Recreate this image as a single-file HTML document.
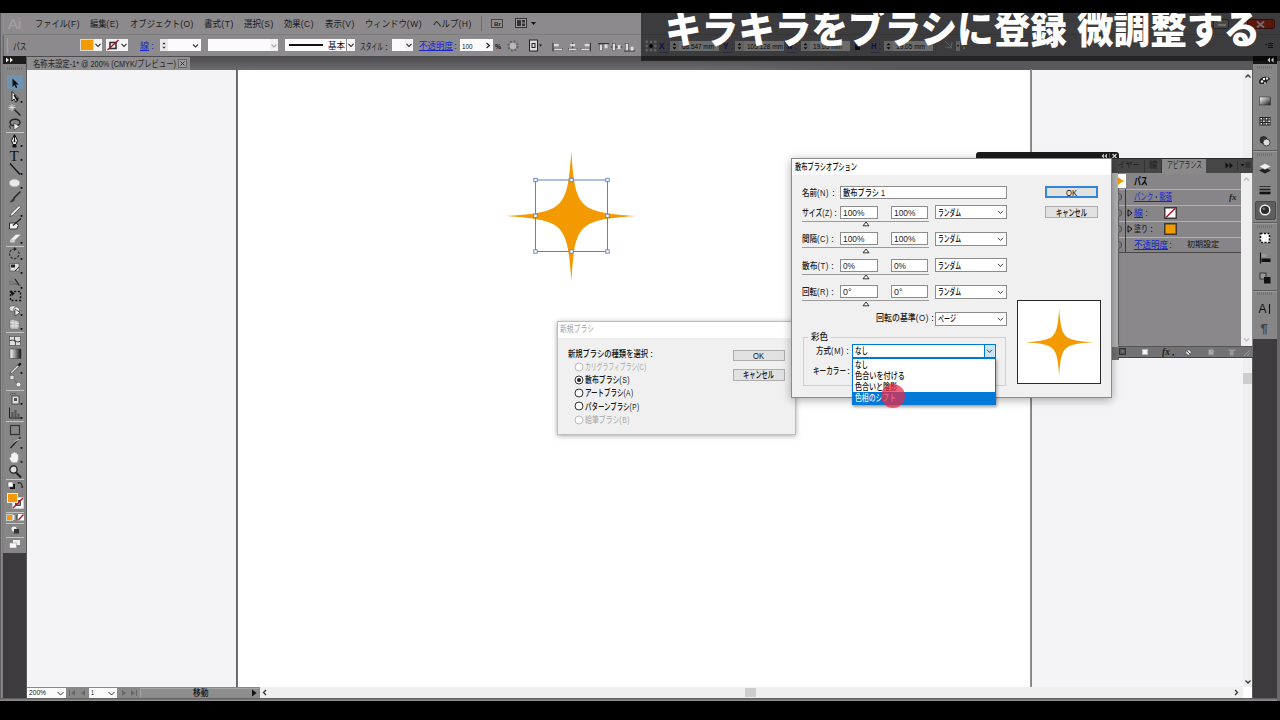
<!DOCTYPE html>
<html lang="ja">
<head>
<meta charset="utf-8">
<title>Illustrator</title>
<style>
html,body{margin:0;padding:0;}
body{width:1280px;height:720px;overflow:hidden;background:#000;position:relative;
 font-family:"Liberation Sans","Noto Sans CJK JP",sans-serif;font-size:10px;color:#111;}
.a{position:absolute;}
.t{position:absolute;white-space:nowrap;line-height:1;transform-origin:0 50%;}
</style>
</head>
<body>
<div class="a" style="left:0px;top:13px;width:1280px;height:688px;background:#777;"></div>
<div class="a" style="left:0px;top:13px;width:1280px;height:21px;background:#8c8a8d;"></div>
<div class="a" style="left:0px;top:34px;width:1280px;height:1px;background:#7d7c7d;"></div>
<div class="a" style="left:3px;top:35px;width:1277px;height:21px;background:#8c8a8d;"></div>
<svg class="a" style="left:0px;top:13px;" width="4" height="688" viewBox="0 0 4 688"><rect x="0" y="0" width="0.9" height="688" fill="#5b5a5c"/><rect x="0.9" y="0" width="1.9" height="688" fill="#8c8a8d"/><rect x="2.8" y="22" width="0.8" height="666" fill="#545355"/></svg>
<div class="a" style="left:27px;top:56px;width:1226px;height:13.5px;background:linear-gradient(#4b4a4c,#6d6b6e);"></div>
<div class="a" style="left:700px;top:56px;width:553px;height:13.5px;background:linear-gradient(90deg,rgba(88,87,89,0),rgba(88,87,89,1) 200px);"></div>
<div class="a" style="left:27px;top:57px;width:163px;height:12.5px;background:#908e91;"></div>
<div class="a" style="left:27px;top:69.5px;width:1216px;height:617.5px;background:#f4f3f5;"></div>
<div class="a" style="left:237px;top:69.5px;width:794px;height:617.5px;background:#fff;"></div>
<svg class="a" style="left:235px;top:69px;" width="4" height="619" viewBox="0 0 4 619"><rect x="1.1" y="0" width="1.7" height="619" fill="#555457"/></svg>
<svg class="a" style="left:1029px;top:69px;" width="4" height="619" viewBox="0 0 4 619"><rect x="1.1" y="0" width="1.9" height="619" fill="#858486"/></svg>
<div class="a" style="left:1243px;top:69.5px;width:10px;height:617.5px;background:#f0eff0;"></div>
<div class="a" style="left:260px;top:687px;width:983px;height:11px;background:#f0eff0;"></div>
<div class="a" style="left:1243px;top:687px;width:10px;height:11px;background:#fff;"></div>
<div class="a" style="left:0px;top:698px;width:1280px;height:3px;background:linear-gradient(#5a595a,#9a999a);"></div>
<div class="a" style="left:3px;top:56px;width:23px;height:8px;background:#1c1c1c;"></div>
<div class="a" style="left:3px;top:64px;width:23px;height:489px;background:#878687;"></div>
<div class="a" style="left:3px;top:553px;width:23px;height:145px;background:#3d3b3d;"></div>
<div class="a" style="left:26px;top:56px;width:1px;height:642px;background:#5a595a;"></div>
<div class="a" style="left:1253px;top:56px;width:24px;height:8px;background:#151515;"></div>
<div class="a" style="left:1253px;top:64px;width:24px;height:275px;background:#878687;"></div>
<div class="a" style="left:1253px;top:339px;width:24px;height:359px;background:#3d3b3d;"></div>
<div class="a" style="left:1277px;top:56px;width:3px;height:645px;background:#6a696a;"></div>
<div class="a" style="left:1252px;top:64px;width:1px;height:634px;background:#5a595a;"></div>
<span class="t" style="left:8px;top:16.00px;font-size:15px;color:#a3a2a3;transform:scaleX(1.0117);">Ai</span>
<span class="t" style="left:35px;top:19.05px;font-size:9.5px;color:#1b1b1b;transform:scaleX(0.8628);">ファイル<span style="letter-spacing:.07em">(F)</span></span>
<span class="t" style="left:90px;top:19.05px;font-size:9.5px;color:#1b1b1b;transform:scaleX(0.8609);">編集<span style="letter-spacing:.07em">(E)</span></span>
<span class="t" style="left:130px;top:19.05px;font-size:9.5px;color:#1b1b1b;transform:scaleX(0.8799);">オブジェクト<span style="letter-spacing:.07em">(O)</span></span>
<span class="t" style="left:204px;top:19.05px;font-size:9.5px;color:#1b1b1b;transform:scaleX(0.9048);">書式<span style="letter-spacing:.07em">(T)</span></span>
<span class="t" style="left:244px;top:19.05px;font-size:9.5px;color:#1b1b1b;transform:scaleX(0.8905);">選択<span style="letter-spacing:.07em">(S)</span></span>
<span class="t" style="left:284px;top:19.05px;font-size:9.5px;color:#1b1b1b;transform:scaleX(0.8771);">効果<span style="letter-spacing:.07em">(C)</span></span>
<span class="t" style="left:324.5px;top:19.05px;font-size:9.5px;color:#1b1b1b;transform:scaleX(0.8905);">表示<span style="letter-spacing:.07em">(V)</span></span>
<span class="t" style="left:365px;top:19.05px;font-size:9.5px;color:#1b1b1b;transform:scaleX(0.8795);">ウィンドウ<span style="letter-spacing:.07em">(W)</span></span>
<span class="t" style="left:433px;top:19.05px;font-size:9.5px;color:#1b1b1b;transform:scaleX(0.8924);">ヘルプ<span style="letter-spacing:.07em">(H)</span></span>
<div class="a" style="left:481px;top:16px;width:1px;height:15px;background:#6d6c6d;"></div>
<div class="a" style="left:491px;top:19px;width:12px;height:9px;background:#8f8f8f;border:1px solid #444;box-sizing:border-box;"></div>
<span class="t" style="left:493.5px;top:20.80px;font-size:6px;color:#222;font-weight:700;transform:scaleX(1.0492);">Br</span>
<svg class="a" style="left:515px;top:18px;" width="22" height="11" viewBox="0 0 22 11"><rect x="0.5" y="0.5" width="11" height="9" fill="#999" stroke="#333"/><rect x="2" y="2" width="4" height="6" fill="#333"/><rect x="7" y="2" width="3" height="2.5" fill="#333"/><rect x="7" y="5.5" width="3" height="2.5" fill="#333"/><path d="M16 4h5l-2.5 3z" fill="#111"/></svg>
<div class="a" style="left:7px;top:38px;width:1px;height:15px;background:#a2a1a2;"></div>
<span class="t" style="left:13px;top:41.65px;font-size:9.5px;color:#1b1b1b;transform:scaleX(0.7099);">パス</span>
<div class="a" style="left:80px;top:39px;width:14px;height:12px;background:#f39a00;border:1px solid #d9d9d9;box-sizing:border-box;"></div>
<svg class="a" style="left:94px;top:39px;" width="8" height="12" viewBox="0 0 8 12"><rect width="8" height="12" fill="#f4f4f4"/><path d="M1.5 4.8L4.0 7.5L6.5 4.8" fill="none" stroke="#222" stroke-width="1.1"/></svg>
<svg class="a" style="left:106px;top:39px;" width="14" height="12" viewBox="0 0 14 12"><rect width="14" height="12" fill="#f4f4f4"/><rect x="4" y="3.5" width="6" height="6" fill="none" stroke="#333" stroke-width="1.6"/><path d="M1.5 11L12.5 1" stroke="#b0121b" stroke-width="1.4"/></svg>
<svg class="a" style="left:120px;top:39px;" width="8" height="12" viewBox="0 0 8 12"><rect width="8" height="12" fill="#f4f4f4"/><path d="M1.5 4.8L4.0 7.5L6.5 4.8" fill="none" stroke="#222" stroke-width="1.1"/></svg>
<span class="t" style="left:140px;top:41.70px;font-size:9px;color:#1626cc;text-decoration:underline;transform:scaleX(0.9983);">線</span>
<span class="t" style="left:151px;top:41.70px;font-size:9px;color:#1626cc;transform:scaleX(1.1925);">:</span>
<svg class="a" style="left:160px;top:39px;" width="8" height="12" viewBox="0 0 8 12"><rect width="8" height="12" fill="#e9e9e9"/><path d="M2.3 5.3L4 3.3L5.7 5.3zM2.3 7.7L4 9.7L5.7 7.7z" fill="#333"/></svg>
<div class="a" style="left:168px;top:39px;width:33px;height:12px;background:#fbfbfb;"></div>
<svg class="a" style="left:190px;top:39px;" width="11" height="13" viewBox="0 0 11 13"><path d="M3 5.5L5.5 8L8 5.5" fill="none" stroke="#333" stroke-width="1.1"/></svg>
<div class="a" style="left:208px;top:39px;width:62px;height:12px;background:#fbfbfb;"></div>
<svg class="a" style="left:270px;top:39px;" width="8" height="12" viewBox="0 0 8 12"><rect width="8" height="12" fill="#f1f1f1"/><path d="M1.5 5.5L4 8L6.5 5.5" fill="none" stroke="#aaa" stroke-width="1.1"/></svg>
<div class="a" style="left:285px;top:39px;width:61px;height:12px;background:#fbfbfb;"></div>
<div class="a" style="left:289px;top:44.3px;width:34px;height:2px;background:#111;"></div>
<span class="t" style="left:328px;top:41.70px;font-size:9px;color:#111;transform:scaleX(0.9436);">基本</span>
<svg class="a" style="left:347px;top:39px;" width="8" height="12" viewBox="0 0 8 12"><rect width="8" height="12" fill="#f4f4f4"/><path d="M1.5 4.8L4.0 7.5L6.5 4.8" fill="none" stroke="#222" stroke-width="1.1"/></svg>
<span class="t" style="left:360px;top:41.65px;font-size:9.5px;color:#1b1b1b;transform:scaleX(0.6050);">スタイル</span>
<span class="t" style="left:385px;top:41.65px;font-size:9.5px;color:#1b1b1b;transform:scaleX(1.1361);">:</span>
<div class="a" style="left:392px;top:39px;width:13px;height:12px;background:#fbfbfb;"></div>
<svg class="a" style="left:405px;top:39px;" width="8" height="12" viewBox="0 0 8 12"><rect width="8" height="12" fill="#f4f4f4"/><path d="M1.5 4.8L4.0 7.5L6.5 4.8" fill="none" stroke="#222" stroke-width="1.1"/></svg>
<span class="t" style="left:419px;top:41.90px;font-size:9px;color:#1626cc;text-decoration:underline;transform:scaleX(0.9440);">不透明度</span>
<span class="t" style="left:454px;top:41.90px;font-size:9px;color:#1626cc;transform:scaleX(1.1925);">:</span>
<div class="a" style="left:460px;top:39px;width:33px;height:12px;background:#fbfbfb;"></div>
<span class="t" style="left:462px;top:42.70px;font-size:7px;color:#111;transform:scaleX(0.8984);">100</span>
<svg class="a" style="left:483px;top:39px;" width="10" height="13" viewBox="0 0 10 13"><path d="M3.5 4L6.5 6.5L3.5 9" fill="none" stroke="#222" stroke-width="1.2"/></svg>
<span class="t" style="left:495px;top:42.70px;font-size:7px;color:#111;font-weight:700;transform:scaleX(0.9624);">%</span>
<svg class="a" style="left:506px;top:39px;" width="14" height="14" viewBox="0 0 14 14"><circle cx="7" cy="7" r="4.6" fill="none" stroke="#666" stroke-width="2.2" stroke-dasharray="2 1.6"/><circle cx="7" cy="7" r="3.2" fill="#b8b8b8"/></svg>
<svg class="a" style="left:528px;top:39px;" width="14" height="14" viewBox="0 0 14 14"><rect x="1.5" y="1" width="8" height="11" fill="#ddd" stroke="#222"/><rect x="4" y="4.5" width="3" height="4" fill="none" stroke="#222"/><path d="M11 5.5h3l-1.5 2z" fill="#111"/></svg>
<svg class="a" style="left:552px;top:41.5px;transform:scale(.95,.78);transform-origin:0 0;" width="12" height="13" viewBox="0 0 12 13"><path d="M1 1v11" stroke="#222"/><rect x="2" y="2.5" width="5" height="3" fill="#ddd"/><rect x="2" y="8" width="9" height="3" fill="#ddd" stroke="#333" stroke-width=".5"/></svg>
<svg class="a" style="left:567px;top:41.5px;transform:scale(.95,.78);transform-origin:0 0;" width="12" height="13" viewBox="0 0 12 13"><path d="M6 1v11" stroke="#222"/><rect x="3.5" y="2.5" width="5" height="3" fill="#ddd"/><rect x="1.5" y="8" width="9" height="3" fill="#ddd" stroke="#333" stroke-width=".5"/></svg>
<svg class="a" style="left:580px;top:41.5px;transform:scale(.95,.78);transform-origin:0 0;" width="12" height="13" viewBox="0 0 12 13"><path d="M11 1v11" stroke="#222"/><rect x="5" y="2.5" width="5" height="3" fill="#ddd"/><rect x="1" y="8" width="9" height="3" fill="#ddd" stroke="#333" stroke-width=".5"/></svg>
<svg class="a" style="left:598px;top:41.5px;transform:scale(.95,.78);transform-origin:0 0;" width="12" height="13" viewBox="0 0 12 13"><path d="M0 2h12" stroke="#222"/><rect x="1.5" y="3" width="3" height="8" fill="#ddd" stroke="#333" stroke-width=".5"/><rect x="7" y="3" width="3" height="5" fill="#ddd"/></svg>
<svg class="a" style="left:611px;top:41.5px;transform:scale(.95,.78);transform-origin:0 0;" width="12" height="13" viewBox="0 0 12 13"><path d="M0 6.5h12" stroke="#222"/><rect x="1.5" y="2" width="3" height="9" fill="#ddd" stroke="#333" stroke-width=".5"/><rect x="7" y="4" width="3" height="5" fill="#ddd"/></svg>
<svg class="a" style="left:624px;top:41.5px;transform:scale(.95,.78);transform-origin:0 0;" width="12" height="13" viewBox="0 0 12 13"><path d="M0 11.5h12" stroke="#222"/><rect x="1.5" y="2" width="3" height="9" fill="#ddd" stroke="#333" stroke-width=".5"/><rect x="7" y="6" width="3" height="5" fill="#ddd"/></svg>
<span class="t" style="left:33px;top:58.55px;font-size:9.5px;color:#262626;transform:scaleX(0.7712);">名称未設定-1* @ 200% (CMYK/プレビュー)</span>
<svg class="a" style="left:178px;top:59px;" width="9" height="9" viewBox="0 0 9 9"><rect x=".5" y=".5" width="8" height="8" fill="#9b9b9b" stroke="#666"/><path d="M2.5 2.5l4 4M6.5 2.5l-4 4" stroke="#333" stroke-width="1"/></svg>
<svg class="a" style="left:500px;top:150px;" width="142" height="132" viewBox="0 0 142 132"><path d="M71.3 1.3C75.28 58.9 78.5 62.12 136.1 66.1C78.5 70.08 75.28 73.3 71.3 130.9C67.32 73.3 64.1 70.08 6.5 66.1C64.1 62.12 67.32 58.9 71.3 1.3Z" fill="#f39a00"/><rect x="35.5" y="30" width="72" height="71.5" fill="none" stroke="#5d80c8" stroke-width="1"/><rect x="33.8" y="28.3" width="3.4" height="3.4" fill="#fff" stroke="#5d80c8" stroke-width=".9"/><rect x="69.8" y="28.3" width="3.4" height="3.4" fill="#fff" stroke="#5d80c8" stroke-width=".9"/><rect x="105.8" y="28.3" width="3.4" height="3.4" fill="#fff" stroke="#5d80c8" stroke-width=".9"/><rect x="33.8" y="64.1" width="3.4" height="3.4" fill="#fff" stroke="#5d80c8" stroke-width=".9"/><rect x="105.8" y="64.1" width="3.4" height="3.4" fill="#fff" stroke="#5d80c8" stroke-width=".9"/><rect x="33.8" y="99.8" width="3.4" height="3.4" fill="#fff" stroke="#5d80c8" stroke-width=".9"/><rect x="69.8" y="99.8" width="3.4" height="3.4" fill="#fff" stroke="#5d80c8" stroke-width=".9"/><rect x="105.8" y="99.8" width="3.4" height="3.4" fill="#fff" stroke="#5d80c8" stroke-width=".9"/></svg>
<svg class="a" style="left:1243px;top:70px;" width="10" height="12" viewBox="0 0 10 12"><path d="M2.5 7.5L5 5L7.5 7.5" fill="none" stroke="#333" stroke-width="1.3"/></svg>
<svg class="a" style="left:1243px;top:676px;" width="10" height="12" viewBox="0 0 10 12"><path d="M2.5 4.5L5 7L7.5 4.5" fill="none" stroke="#333" stroke-width="1.3"/></svg>
<svg class="a" style="left:1231px;top:687px;" width="10" height="11" viewBox="0 0 10 11"><path d="M4 3L6.5 5.5L4 8" fill="none" stroke="#333" stroke-width="1.3"/></svg>
<svg class="a" style="left:260px;top:687px;" width="10" height="11" viewBox="0 0 10 11"><path d="M6 3L3.5 5.5L6 8" fill="none" stroke="#333" stroke-width="1.3"/></svg>
<div class="a" style="left:745px;top:688px;width:11px;height:9px;background:#cdcdcd;"></div>
<div class="a" style="left:1243px;top:373px;width:8.5px;height:11px;background:#cdcdcd;"></div>
<div class="a" style="left:27px;top:687px;width:233px;height:11px;background:#8a898a;"></div>
<div class="a" style="left:27px;top:688px;width:39px;height:10px;background:#fbfbfb;"></div>
<span class="t" style="left:29px;top:689.00px;font-size:8px;color:#111;transform:scaleX(0.8305);">200%</span>
<svg class="a" style="left:55px;top:688px;" width="11" height="10" viewBox="0 0 11 10"><path d="M2.5 4L5.5 7L8.5 4" fill="none" stroke="#333" stroke-width="1"/></svg>
<svg class="a" style="left:68px;top:689px;" width="8" height="8" viewBox="0 0 8 8"><path d="M1.5 1v6" stroke="#666"/><path d="M7 1L3 4L7 7z" fill="#666"/></svg>
<svg class="a" style="left:79px;top:689px;" width="8" height="8" viewBox="0 0 8 8"><path d="M6 1L2 4L6 7z" fill="#666"/></svg>
<div class="a" style="left:89px;top:688px;width:28px;height:10px;background:#fbfbfb;"></div>
<span class="t" style="left:91px;top:689.00px;font-size:8px;color:#111;transform:scaleX(0.6737);">1</span>
<svg class="a" style="left:106px;top:688px;" width="11" height="10" viewBox="0 0 11 10"><path d="M2.5 4L5.5 7L8.5 4" fill="none" stroke="#333" stroke-width="1"/></svg>
<svg class="a" style="left:120px;top:689px;" width="8" height="8" viewBox="0 0 8 8"><path d="M2 1L6 4L2 7z" fill="#666"/></svg>
<svg class="a" style="left:130px;top:689px;" width="8" height="8" viewBox="0 0 8 8"><path d="M6.5 1v6" stroke="#666"/><path d="M1 1L5 4L1 7z" fill="#666"/></svg>
<div class="a" style="left:140px;top:688px;width:119px;height:10px;background:#8e8d8e;border:none;box-sizing:border-box;border-top:1px solid #a5a5a5;border-left:1px solid #a5a5a5;box-sizing:border-box;"></div>
<span class="t" style="left:192.5px;top:688.50px;font-size:9px;color:#111;font-weight:500;transform:scaleX(0.8604);">移動</span>
<svg class="a" style="left:250px;top:689px;" width="8" height="8" viewBox="0 0 8 8"><path d="M2 .5L6.5 4L2 7.5z" fill="#111"/></svg>
<div class="a" style="left:557px;top:321px;width:239px;height:114px;background:#f0f0f0;border:1px solid #bdbdbd;box-sizing:border-box;box-shadow:0 1px 5px rgba(0,0,0,.35);"></div>
<div class="a" style="left:558px;top:322px;width:237px;height:16px;background:#fff;"></div>
<span class="t" style="left:560px;top:325.20px;font-size:9px;color:#a0a0a0;transform:scaleX(0.7585);">新規ブラシ</span>
<span class="t" style="left:568px;top:348.95px;font-size:9.5px;color:#111;font-weight:500;transform:scaleX(0.7669);">新規ブラシの種類を選択</span>
<span class="t" style="left:650px;top:348.95px;font-size:9.5px;color:#111;font-weight:500;transform:scaleX(1.1361);">:</span>
<svg class="a" style="left:573.7px;top:361.9px;" width="10" height="10" viewBox="0 0 10 10"><circle cx="5" cy="5" r="4" fill="#fff" stroke="#bbb" stroke-width="1"/></svg>
<span class="t" style="left:585px;top:362.15px;font-size:9.5px;color:#a8a8a8;transform:scaleX(0.6131);">カリグラフィブラシ<span style="letter-spacing:.07em">(C)</span></span>
<svg class="a" style="left:573.7px;top:375.04999999999995px;" width="10" height="10" viewBox="0 0 10 10"><circle cx="5" cy="5" r="4" fill="#fff" stroke="#333" stroke-width="1"/><circle cx="5" cy="5" r="2" fill="#222"/></svg>
<span class="t" style="left:585px;top:375.30px;font-size:9.5px;color:#111;font-weight:500;transform:scaleX(0.7260);">散布ブラシ<span style="letter-spacing:.07em">(S)</span></span>
<svg class="a" style="left:573.7px;top:388.2px;" width="10" height="10" viewBox="0 0 10 10"><circle cx="5" cy="5" r="4" fill="#fff" stroke="#333" stroke-width="1"/></svg>
<span class="t" style="left:585px;top:388.45px;font-size:9.5px;color:#111;font-weight:500;transform:scaleX(0.6839);">アートブラシ<span style="letter-spacing:.07em">(A)</span></span>
<svg class="a" style="left:573.7px;top:401.34999999999997px;" width="10" height="10" viewBox="0 0 10 10"><circle cx="5" cy="5" r="4" fill="#fff" stroke="#333" stroke-width="1"/></svg>
<span class="t" style="left:585px;top:401.60px;font-size:9.5px;color:#111;font-weight:500;transform:scaleX(0.6793);">パターンブラシ<span style="letter-spacing:.07em">(P)</span></span>
<svg class="a" style="left:573.7px;top:414.5px;" width="10" height="10" viewBox="0 0 10 10"><circle cx="5" cy="5" r="4" fill="#fff" stroke="#bbb" stroke-width="1"/></svg>
<span class="t" style="left:585px;top:414.75px;font-size:9.5px;color:#a8a8a8;transform:scaleX(0.7260);">絵筆ブラシ<span style="letter-spacing:.07em">(B)</span></span>
<div class="a" style="left:732.5px;top:349.5px;width:52px;height:11.5px;background:#e1e1e1;border:1px solid #adadad;box-sizing:border-box;"></div>
<span class="t" style="left:753.0px;top:350.80px;font-size:9.5px;color:#111;font-weight:500;transform:scaleX(0.8009);">OK</span>
<div class="a" style="left:732.5px;top:369px;width:52px;height:11.5px;background:#e1e1e1;border:1px solid #adadad;box-sizing:border-box;"></div>
<span class="t" style="left:743.0px;top:370.30px;font-size:9.5px;color:#111;font-weight:500;transform:scaleX(0.6524);">キャンセル</span>
<div class="a" style="left:975.5px;top:152px;width:143px;height:8px;background:#1b1b1b;border:none;box-sizing:border-box;border-radius:3px 3px 0 0;"></div>
<svg class="a" style="left:1100px;top:153px;" width="18" height="6" viewBox="0 0 18 6"><path d="M4 .5L1.5 3L4 5.5zM7 .5L4.5 3L7 5.5z" fill="#ccc"/><path d="M9.5 0v6" stroke="#555"/><path d="M12.5 1l4 4M16.5 1l-4 4" stroke="#ddd" stroke-width="1.1"/></svg>
<div class="a" style="left:1112px;top:158px;width:141px;height:200px;background:#8a888b;"></div>
<div class="a" style="left:1112px;top:158px;width:141px;height:15px;background:#474647;"></div>
<div class="a" style="left:1112px;top:157.5px;width:141px;height:1px;background:#2c2c2c;"></div>
<div class="a" style="left:1162px;top:159px;width:44px;height:14px;background:#8b8a8b;"></div>
<div class="a" style="left:1144px;top:160px;width:1px;height:13px;background:#333;"></div>
<div class="a" style="left:1161px;top:160px;width:1px;height:13px;background:#333;"></div>
<span class="t" style="left:1118px;top:161.30px;font-size:9px;color:#1d1d1d;transform:scaleX(0.8229);">イヤー</span>
<span class="t" style="left:1149px;top:161.30px;font-size:9px;color:#1d1d1d;transform:scaleX(0.9428);">線</span>
<span class="t" style="left:1167px;top:161.30px;font-size:9px;color:#222;transform:scaleX(0.6502);">アピアランス</span>
<svg class="a" style="left:1225px;top:162px;" width="9" height="7" viewBox="0 0 9 7"><path d="M.5 .5L4 3.5L.5 6.5zM4.5 .5L8 3.5L4.5 6.5z" fill="#111"/></svg>
<div class="a" style="left:1237px;top:161px;width:1px;height:9px;background:#333;"></div>
<svg class="a" style="left:1240px;top:162px;" width="11" height="7" viewBox="0 0 11 7"><path d="M.5 2h4l-2 2.5z" fill="#111"/><path d="M5.5 1h5M5.5 3h5M5.5 5h5" stroke="#222" stroke-width="1"/></svg>
<div class="a" style="left:1112px;top:173px;width:6px;height:173.5px;background:#b4b3b5;"></div>
<div class="a" style="left:1112px;top:347px;width:6.5px;height:12.5px;background:#737273;"></div>
<div class="a" style="left:1118px;top:173.5px;width:123px;height:15.5px;background:#878588;"></div>
<div class="a" style="left:1118px;top:189px;width:123px;height:15.5px;background:#878588;"></div>
<div class="a" style="left:1118px;top:205px;width:123px;height:15.5px;background:#878588;"></div>
<div class="a" style="left:1118px;top:221px;width:123px;height:15.5px;background:#878588;"></div>
<div class="a" style="left:1118px;top:237px;width:123px;height:15.5px;background:#878588;"></div>
<div class="a" style="left:1118px;top:188.5px;width:123px;height:1px;background:#b2b1b2;"></div>
<div class="a" style="left:1118px;top:204.5px;width:123px;height:1px;background:#b2b1b2;"></div>
<div class="a" style="left:1118px;top:220.5px;width:123px;height:1px;background:#b2b1b2;"></div>
<div class="a" style="left:1118px;top:236.5px;width:123px;height:1px;background:#b2b1b2;"></div>
<div class="a" style="left:1118px;top:252px;width:123px;height:1.3px;background:#4a494a;"></div>
<div class="a" style="left:1125px;top:189px;width:1px;height:63px;background:#3a393a;"></div>
<div class="a" style="left:1118px;top:173px;width:1px;height:172px;background:#5e5d5e;"></div>
<svg class="a" style="left:1118px;top:174px;" width="8" height="14" viewBox="0 0 8 14"><rect width="8" height="14" fill="#fff"/><path d="M0 3C3 5.5 5.5 7 7.5 7C5.5 7 3 8.5 0 11z" fill="#f39a00"/></svg>
<span class="t" style="left:1134px;top:176.70px;font-size:10px;color:#000;font-weight:700;transform:scaleX(0.6750);">パス</span>
<span class="t" style="left:1134px;top:192.25px;font-size:9.5px;color:#1626cc;text-decoration:underline;transform:scaleX(0.6632);">パンク・膨張</span>
<svg class="a" style="left:1229px;top:192px;" width="10" height="10" viewBox="0 0 10 10"><text x="0" y="8" font-family="Liberation Serif,serif" font-style="italic" font-weight="700" font-size="9" fill="#222">fx</text></svg>
<svg class="a" style="left:1127px;top:209px;" width="6" height="8" viewBox="0 0 6 8"><path d="M1 .8L5 4L1 7.2z" fill="none" stroke="#111" stroke-width="1"/></svg>
<svg class="a" style="left:1127px;top:225px;" width="6" height="8" viewBox="0 0 6 8"><path d="M1 .8L5 4L1 7.2z" fill="none" stroke="#111" stroke-width="1"/></svg>
<span class="t" style="left:1134px;top:208.25px;font-size:9.5px;color:#1626cc;text-decoration:underline;transform:scaleX(0.9458);">線</span>
<span class="t" style="left:1144.5px;top:208.25px;font-size:9.5px;color:#1626cc;transform:scaleX(1.1361);">:</span>
<span class="t" style="left:1134px;top:224.25px;font-size:9.5px;color:#111;transform:scaleX(0.7362);">塗り</span>
<span class="t" style="left:1149.5px;top:224.25px;font-size:9.5px;color:#111;transform:scaleX(1.1361);">:</span>
<svg class="a" style="left:1164px;top:206.5px;" width="13" height="12" viewBox="0 0 13 12"><rect x=".75" y=".75" width="11.5" height="10.5" fill="#fff" stroke="#3a3a3a" stroke-width="1.5"/><path d="M2 10.5L11 1.5" stroke="#a3131c" stroke-width="1.5"/></svg>
<svg class="a" style="left:1164px;top:222.5px;" width="13" height="12" viewBox="0 0 13 12"><rect x=".75" y=".75" width="11.5" height="10.5" fill="#f39a00" stroke="#3a3a3a" stroke-width="1.5"/></svg>
<span class="t" style="left:1134px;top:239.95px;font-size:9.5px;color:#1626cc;text-decoration:underline;transform:scaleX(0.8944);">不透明度</span>
<span class="t" style="left:1169px;top:239.95px;font-size:9.5px;color:#1626cc;transform:scaleX(1.1361);">:</span>
<span class="t" style="left:1187px;top:240.45px;font-size:8.5px;color:#111;transform:scaleX(0.9407);">初期設定</span>
<svg class="a" style="left:1118px;top:193px;" width="7" height="8" viewBox="0 0 7 8"><ellipse cx="0.5" cy="4" rx="3.2" ry="3.4" fill="#777" stroke="#555"/></svg>
<svg class="a" style="left:1118px;top:209px;" width="7" height="8" viewBox="0 0 7 8"><ellipse cx="0.5" cy="4" rx="3.2" ry="3.4" fill="#777" stroke="#555"/></svg>
<svg class="a" style="left:1118px;top:225px;" width="7" height="8" viewBox="0 0 7 8"><ellipse cx="0.5" cy="4" rx="3.2" ry="3.4" fill="#777" stroke="#555"/></svg>
<svg class="a" style="left:1118px;top:241px;" width="7" height="8" viewBox="0 0 7 8"><ellipse cx="0.5" cy="4" rx="3.2" ry="3.4" fill="#777" stroke="#555"/></svg>
<div class="a" style="left:1241px;top:173px;width:11px;height:173.3px;background:#f0eff0;"></div>
<svg class="a" style="left:1241px;top:174px;" width="11" height="10" viewBox="0 0 11 10"><path d="M3 6.5L5.5 4L8 6.5" fill="none" stroke="#bbb" stroke-width="1.2"/></svg>
<svg class="a" style="left:1241px;top:335px;" width="11" height="10" viewBox="0 0 11 10"><path d="M3 3.5L5.5 6L8 3.5" fill="none" stroke="#bbb" stroke-width="1.2"/></svg>
<div class="a" style="left:1118px;top:346.3px;width:135px;height:11.7px;background:#727173;border:none;box-sizing:border-box;border-top:1px solid #555;border-bottom:1px solid #444;box-sizing:border-box;"></div>
<svg class="a" style="left:1119px;top:348px;" width="8" height="8" viewBox="0 0 8 8"><rect x=".5" y=".5" width="6" height="6" fill="#555" stroke="#333"/><rect x="2.5" y="2.5" width="2" height="2" fill="#888"/></svg>
<div class="a" style="left:1141.5px;top:348.5px;width:6.5px;height:6.5px;background:#f4f4f4;border:1px solid #bbb;box-sizing:border-box;"></div>
<svg class="a" style="left:1162px;top:347px;" width="14" height="10" viewBox="0 0 14 10"><text x="0" y="8" font-family="Liberation Serif,serif" font-style="italic" font-weight="700" font-size="9.5" fill="#222">fx</text><rect x="10.5" y="7" width="1.5" height="1.5" fill="#111"/></svg>
<svg class="a" style="left:1185px;top:348.5px;" width="8" height="8" viewBox="0 0 8 8"><circle cx="3.5" cy="3.5" r="2.8" fill="#ddd" stroke="#555"/><path d="M1.5 1.5l4 4" stroke="#555"/></svg>
<svg class="a" style="left:1207px;top:348px;" width="8" height="8" viewBox="0 0 8 8"><rect x="1.5" y="1.5" width="5" height="5.5" fill="#aaa" stroke="#888"/><path d="M4.5 0.5v3h3" fill="none" stroke="#999"/></svg>
<svg class="a" style="left:1228px;top:347.5px;" width="8" height="9" viewBox="0 0 8 9"><rect x="1.5" y="2.5" width="4.5" height="5.5" fill="#999" stroke="#777"/><path d="M.5 2h7" stroke="#aaa"/></svg>
<svg class="a" style="left:1243px;top:349px;" width="8" height="8" viewBox="0 0 8 8"><path d="M7 1L1 7M7 4L4 7" stroke="#999"/></svg>
<div class="a" style="left:791px;top:158px;width:321px;height:240px;background:#f0f0f0;border:1px solid #8a8a8a;box-sizing:border-box;box-shadow:0 2px 9px rgba(0,0,0,.33);"></div>
<div class="a" style="left:792px;top:159px;width:319px;height:16px;background:#fff;"></div>
<span class="t" style="left:795px;top:162.25px;font-size:9.5px;color:#111;font-weight:500;transform:scaleX(0.6539);">散布ブラシオプション</span>
<span class="t" style="left:802px;top:187.55px;font-size:9.5px;color:#1a1a1a;font-weight:500;transform:scaleX(0.7894);">名前<span style="letter-spacing:.07em">(N)</span></span>
<span class="t" style="left:831.5px;top:187.55px;font-size:9.5px;color:#1a1a1a;font-weight:500;transform:scaleX(1.1361);">:</span>
<div class="a" style="left:840px;top:185.7px;width:167px;height:13.2px;background:#fff;border:1px solid #8c8c8c;box-sizing:border-box;"></div>
<span class="t" style="left:843px;top:187.85px;font-size:9.5px;color:#111;font-weight:500;transform:scaleX(0.7604);">散布ブラシ 1</span>
<span class="t" style="left:802px;top:207.75px;font-size:9.5px;color:#1a1a1a;font-weight:500;transform:scaleX(0.7200);">サイズ<span style="letter-spacing:.07em">(Z)</span></span>
<span class="t" style="left:834.0px;top:207.75px;font-size:9.5px;color:#1a1a1a;font-weight:500;transform:scaleX(1.1361);">:</span>
<div class="a" style="left:840px;top:205.7px;width:37.5px;height:13.2px;background:#fff;border:1px solid #8c8c8c;box-sizing:border-box;"></div>
<div class="a" style="left:890.5px;top:205.7px;width:37.5px;height:13.2px;background:#fff;border:1px solid #8c8c8c;box-sizing:border-box;"></div>
<span class="t" style="left:843px;top:207.95px;font-size:9.5px;color:#222;transform:scaleX(0.8843);">100%</span>
<span class="t" style="left:893.5px;top:207.95px;font-size:9.5px;color:#222;transform:scaleX(0.8843);">100%</span>
<div class="a" style="left:935px;top:205.2px;width:72px;height:14.2px;background:#fff;border:1px solid #8c8c8c;box-sizing:border-box;"></div>
<svg class="a" style="left:995px;top:205.2px;" width="11" height="14.2" viewBox="0 0 11 14.2"><path d="M3 5.8L5.5 8.5L8 5.8" fill="none" stroke="#444" stroke-width="1"/></svg>
<span class="t" style="left:938px;top:207.85px;font-size:9.5px;color:#111;font-weight:500;transform:scaleX(0.6050);">ランダム</span>
<div class="a" style="left:802px;top:220.7px;width:126.5px;height:1px;background:#9a9a9a;"></div>
<svg class="a" style="left:862px;top:221.2px;" width="8" height="6" viewBox="0 0 8 6"><path d="M4 1L7 4.8H1z" fill="#fff" stroke="#333" stroke-width="1"/></svg>
<span class="t" style="left:802px;top:234.25px;font-size:9.5px;color:#1a1a1a;font-weight:500;transform:scaleX(0.7894);">間隔<span style="letter-spacing:.07em">(C)</span></span>
<span class="t" style="left:830.5px;top:234.25px;font-size:9.5px;color:#1a1a1a;font-weight:500;transform:scaleX(1.1361);">:</span>
<div class="a" style="left:840px;top:232.2px;width:37.5px;height:13.2px;background:#fff;border:1px solid #8c8c8c;box-sizing:border-box;"></div>
<div class="a" style="left:890.5px;top:232.2px;width:37.5px;height:13.2px;background:#fff;border:1px solid #8c8c8c;box-sizing:border-box;"></div>
<span class="t" style="left:843px;top:234.45px;font-size:9.5px;color:#222;transform:scaleX(0.8843);">100%</span>
<span class="t" style="left:893.5px;top:234.45px;font-size:9.5px;color:#222;transform:scaleX(0.8843);">100%</span>
<div class="a" style="left:935px;top:231.7px;width:72px;height:14.2px;background:#fff;border:1px solid #8c8c8c;box-sizing:border-box;"></div>
<svg class="a" style="left:995px;top:231.7px;" width="11" height="14.2" viewBox="0 0 11 14.2"><path d="M3 5.8L5.5 8.5L8 5.8" fill="none" stroke="#444" stroke-width="1"/></svg>
<span class="t" style="left:938px;top:234.35px;font-size:9.5px;color:#111;font-weight:500;transform:scaleX(0.6050);">ランダム</span>
<div class="a" style="left:802px;top:247.2px;width:126.5px;height:1px;background:#9a9a9a;"></div>
<svg class="a" style="left:862px;top:247.7px;" width="8" height="6" viewBox="0 0 8 6"><path d="M4 1L7 4.8H1z" fill="#fff" stroke="#333" stroke-width="1"/></svg>
<span class="t" style="left:802px;top:260.75px;font-size:9.5px;color:#1a1a1a;font-weight:500;transform:scaleX(0.8143);">散布<span style="letter-spacing:.07em">(T)</span></span>
<span class="t" style="left:830.5px;top:260.75px;font-size:9.5px;color:#1a1a1a;font-weight:500;transform:scaleX(1.1361);">:</span>
<div class="a" style="left:840px;top:258.7px;width:37.5px;height:13.2px;background:#fff;border:1px solid #8c8c8c;box-sizing:border-box;"></div>
<div class="a" style="left:890.5px;top:258.7px;width:37.5px;height:13.2px;background:#fff;border:1px solid #8c8c8c;box-sizing:border-box;"></div>
<span class="t" style="left:843px;top:260.95px;font-size:9.5px;color:#222;transform:scaleX(0.8737);">0%</span>
<span class="t" style="left:893.5px;top:260.95px;font-size:9.5px;color:#222;transform:scaleX(0.8737);">0%</span>
<div class="a" style="left:935px;top:258.2px;width:72px;height:14.2px;background:#fff;border:1px solid #8c8c8c;box-sizing:border-box;"></div>
<svg class="a" style="left:995px;top:258.2px;" width="11" height="14.2" viewBox="0 0 11 14.2"><path d="M3 5.8L5.5 8.5L8 5.8" fill="none" stroke="#444" stroke-width="1"/></svg>
<span class="t" style="left:938px;top:260.85px;font-size:9.5px;color:#111;font-weight:500;transform:scaleX(0.6050);">ランダム</span>
<div class="a" style="left:802px;top:273.7px;width:126.5px;height:1px;background:#9a9a9a;"></div>
<svg class="a" style="left:862px;top:274.2px;" width="8" height="6" viewBox="0 0 8 6"><path d="M4 1L7 4.8H1z" fill="#fff" stroke="#333" stroke-width="1"/></svg>
<span class="t" style="left:802px;top:287.25px;font-size:9.5px;color:#1a1a1a;font-weight:500;transform:scaleX(0.7894);">回転<span style="letter-spacing:.07em">(R)</span></span>
<span class="t" style="left:830.5px;top:287.25px;font-size:9.5px;color:#1a1a1a;font-weight:500;transform:scaleX(1.1361);">:</span>
<div class="a" style="left:840px;top:285.2px;width:37.5px;height:13.2px;background:#fff;border:1px solid #8c8c8c;box-sizing:border-box;"></div>
<div class="a" style="left:890.5px;top:285.2px;width:37.5px;height:13.2px;background:#fff;border:1px solid #8c8c8c;box-sizing:border-box;"></div>
<span class="t" style="left:843px;top:287.45px;font-size:9.5px;color:#222;transform:scaleX(0.9347);">0°</span>
<span class="t" style="left:893.5px;top:287.45px;font-size:9.5px;color:#222;transform:scaleX(0.9347);">0°</span>
<div class="a" style="left:935px;top:284.7px;width:72px;height:14.2px;background:#fff;border:1px solid #8c8c8c;box-sizing:border-box;"></div>
<svg class="a" style="left:995px;top:284.7px;" width="11" height="14.2" viewBox="0 0 11 14.2"><path d="M3 5.8L5.5 8.5L8 5.8" fill="none" stroke="#444" stroke-width="1"/></svg>
<span class="t" style="left:938px;top:287.35px;font-size:9.5px;color:#111;font-weight:500;transform:scaleX(0.6050);">ランダム</span>
<div class="a" style="left:802px;top:300.2px;width:126.5px;height:1px;background:#9a9a9a;"></div>
<svg class="a" style="left:862px;top:300.7px;" width="8" height="6" viewBox="0 0 8 6"><path d="M4 1L7 4.8H1z" fill="#fff" stroke="#333" stroke-width="1"/></svg>
<span class="t" style="left:876px;top:313.45px;font-size:9.5px;color:#1a1a1a;font-weight:500;transform:scaleX(0.8382);">回転の基準<span style="letter-spacing:.07em">(O)</span></span>
<span class="t" style="left:930.5px;top:313.45px;font-size:9.5px;color:#1a1a1a;font-weight:500;transform:scaleX(1.1361);">:</span>
<div class="a" style="left:935px;top:311.5px;width:72px;height:14.2px;background:#fff;border:1px solid #8c8c8c;box-sizing:border-box;"></div>
<svg class="a" style="left:995px;top:311.5px;" width="11" height="14.2" viewBox="0 0 11 14.2"><path d="M3 5.8L5.5 8.5L8 5.8" fill="none" stroke="#444" stroke-width="1"/></svg>
<span class="t" style="left:938px;top:314.15px;font-size:9.5px;color:#111;font-weight:500;transform:scaleX(0.6358);">ページ</span>
<div class="a" style="left:802.5px;top:336.5px;width:203.5px;height:49.5px;border:1px solid #d0d0d0;box-sizing:border-box;"></div>
<div class="a" style="left:808px;top:331px;width:23px;height:10px;background:#f0f0f0;"></div>
<span class="t" style="left:811px;top:331.55px;font-size:9.5px;color:#1a1a1a;font-weight:500;transform:scaleX(0.8940);">彩色</span>
<span class="t" style="left:816px;top:345.75px;font-size:9.5px;color:#1a1a1a;font-weight:500;transform:scaleX(0.7940);">方式<span style="letter-spacing:.07em">(M)</span></span>
<span class="t" style="left:845.5px;top:345.75px;font-size:9.5px;color:#1a1a1a;font-weight:500;transform:scaleX(1.1361);">:</span>
<span class="t" style="left:813px;top:366.25px;font-size:9.5px;color:#1a1a1a;font-weight:500;transform:scaleX(0.6945);">キーカラー</span>
<span class="t" style="left:847px;top:366.25px;font-size:9.5px;color:#1a1a1a;font-weight:500;transform:scaleX(1.1361);">:</span>
<div class="a" style="left:852px;top:343.5px;width:143.5px;height:14px;background:#fff;border:1px solid #0078d7;box-sizing:border-box;"></div>
<div class="a" style="left:983.5px;top:344.5px;width:11px;height:12px;background:#cce4f7;border:none;box-sizing:border-box;border-left:1px solid #0078d7;box-sizing:border-box;"></div>
<svg class="a" style="left:983.5px;top:343.5px;" width="11" height="14" viewBox="0 0 11 14"><path d="M3 5.7L5.5 8.4L8 5.7" fill="none" stroke="#444" stroke-width="1"/></svg>
<span class="t" style="left:855px;top:346.05px;font-size:9.5px;color:#111;font-weight:500;transform:scaleX(0.6836);">なし</span>
<div class="a" style="left:1017px;top:300px;width:84px;height:84px;background:#fff;border:1px solid #2a2a2a;box-sizing:border-box;"></div>
<svg class="a" style="left:1017px;top:300px;" width="85" height="84" viewBox="0 0 85 84"><path d="M42.2 8.4C44.28 38.44 45.96 40.12 76.0 42.2C45.96 44.28 44.28 45.96 42.2 76.0C40.12 45.96 38.44 44.28 8.4 42.2C38.44 40.12 40.12 38.44 42.2 8.4Z" fill="#f39a00"/></svg>
<div class="a" style="left:1045px;top:186px;width:52.5px;height:12px;background:#e1e1e1;border:2px solid #2f86dc;box-sizing:border-box;"></div>
<span class="t" style="left:1065.75px;top:187.55px;font-size:9.5px;color:#111;font-weight:500;transform:scaleX(0.8009);">OK</span>
<div class="a" style="left:1045px;top:206px;width:52.5px;height:12px;background:#e1e1e1;border:1px solid #adadad;box-sizing:border-box;"></div>
<span class="t" style="left:1055.75px;top:207.55px;font-size:9.5px;color:#111;font-weight:500;transform:scaleX(0.6524);">キャンセル</span>
<div class="a" style="left:852px;top:357.5px;width:143.5px;height:47px;background:#fff;border:1px solid #0078d7;box-sizing:border-box;box-shadow:1px 2px 3px rgba(0,0,0,.35);"></div>
<div class="a" style="left:853px;top:392px;width:141.5px;height:11.5px;background:#0078d7;"></div>
<span class="t" style="left:855px;top:359.55px;font-size:9.5px;color:#111;font-weight:500;transform:scaleX(0.6836);">なし</span>
<span class="t" style="left:855px;top:371.05px;font-size:9.5px;color:#111;font-weight:500;transform:scaleX(0.7517);">色合いを付ける</span>
<span class="t" style="left:855px;top:382.25px;font-size:9.5px;color:#111;font-weight:500;transform:scaleX(0.7366);">色合いと陰影</span>
<span class="t" style="left:855px;top:393.25px;font-size:9.5px;color:#e8f2ff;font-weight:500;transform:scaleX(0.7191);">色相のシフト</span>
<div class="a" style="left:880.5px;top:383.5px;width:24px;height:24px;background:rgba(236,40,70,.72);border:none;box-sizing:border-box;border-radius:50%;"></div>
<svg class="a" style="left:644.5px;top:39.5px;" width="12" height="12" viewBox="0 0 12 12"><rect x="0.5" y="0.5" width="2.6" height="2.6" fill="#dedede"/><rect x="0.5" y="4.7" width="2.6" height="2.6" fill="#dedede"/><rect x="0.5" y="8.9" width="2.6" height="2.6" fill="#dedede"/><rect x="4.7" y="0.5" width="2.6" height="2.6" fill="#dedede"/><rect x="4.7" y="4.7" width="2.6" height="2.6" fill="#dedede"/><rect x="4.7" y="8.9" width="2.6" height="2.6" fill="#dedede"/><rect x="8.9" y="0.5" width="2.6" height="2.6" fill="#dedede"/><rect x="8.9" y="4.7" width="2.6" height="2.6" fill="#dedede"/><rect x="8.9" y="8.9" width="2.6" height="2.6" fill="#dedede"/><circle cx="6" cy="6" r="1.9" fill="#000"/></svg>
<span class="t" style="left:659px;top:42.25px;font-size:8.5px;color:#2222a8;font-weight:700;transform:scaleX(0.9697);">X</span>
<span class="t" style="left:666.5px;top:42.25px;font-size:8.5px;color:#2222a8;transform:scaleX(0.8421);">:</span>
<div class="a" style="left:659px;top:52px;width:9px;height:1px;background:rgba(50,50,160,.45);"></div>
<svg class="a" style="left:670px;top:40.5px;" width="9" height="10.5" viewBox="0 0 9 10.5"><rect width="9" height="10.5" fill="#e6e6e6"/><path d="M2.5 4.3L4.5 2L6.5 4.3zM2.5 6.2L4.5 8.5L6.5 6.2z" fill="#111"/></svg>
<div class="a" style="left:679px;top:40.5px;width:40px;height:10.5px;background:#fbfbfb;"></div>
<span class="t" style="left:682px;top:42.75px;font-size:7.5px;color:#111;transform:scaleX(0.8526);">68.547 mm</span>
<span class="t" style="left:723px;top:42.25px;font-size:8.5px;color:#2222a8;font-weight:700;transform:scaleX(0.9697);">Y</span>
<span class="t" style="left:730.5px;top:42.25px;font-size:8.5px;color:#2222a8;transform:scaleX(0.8421);">:</span>
<div class="a" style="left:723px;top:52px;width:9px;height:1px;background:rgba(50,50,160,.45);"></div>
<svg class="a" style="left:735px;top:40.5px;" width="9" height="10.5" viewBox="0 0 9 10.5"><rect width="9" height="10.5" fill="#e6e6e6"/><path d="M2.5 4.3L4.5 2L6.5 4.3zM2.5 6.2L4.5 8.5L6.5 6.2z" fill="#111"/></svg>
<div class="a" style="left:744px;top:40.5px;width:40px;height:10.5px;background:#fbfbfb;"></div>
<span class="t" style="left:747px;top:42.75px;font-size:7.5px;color:#111;transform:scaleX(0.8632);">105.128 mm</span>
<span class="t" style="left:787px;top:42.25px;font-size:8.5px;color:#2222a8;font-weight:700;transform:scaleX(0.6848);">W</span>
<span class="t" style="left:794.5px;top:42.25px;font-size:8.5px;color:#2222a8;transform:scaleX(0.8421);">:</span>
<div class="a" style="left:787px;top:52px;width:9px;height:1px;background:rgba(50,50,160,.45);"></div>
<svg class="a" style="left:800.5px;top:40.5px;" width="9" height="10.5" viewBox="0 0 9 10.5"><rect width="9" height="10.5" fill="#e6e6e6"/><path d="M2.5 4.3L4.5 2L6.5 4.3zM2.5 6.2L4.5 8.5L6.5 6.2z" fill="#111"/></svg>
<div class="a" style="left:809.5px;top:40.5px;width:40px;height:10.5px;background:#fbfbfb;"></div>
<span class="t" style="left:812.5px;top:42.75px;font-size:7.5px;color:#111;transform:scaleX(0.8693);">19.05 mm</span>
<svg class="a" style="left:853px;top:41px;" width="9" height="10" viewBox="0 0 9 10"><path d="M2 4.5h5v4.5h-5z" fill="#222"/><path d="M3 4.5v-2a1.5 1.5 0 0 1 3 0" fill="none" stroke="#222"/></svg>
<span class="t" style="left:871px;top:42.25px;font-size:8.5px;color:#2222a8;font-weight:700;transform:scaleX(0.8957);">H</span>
<span class="t" style="left:878.5px;top:42.25px;font-size:8.5px;color:#2222a8;transform:scaleX(0.8421);">:</span>
<div class="a" style="left:871px;top:52px;width:9px;height:1px;background:rgba(50,50,160,.45);"></div>
<svg class="a" style="left:884px;top:40.5px;" width="9" height="10.5" viewBox="0 0 9 10.5"><rect width="9" height="10.5" fill="#e6e6e6"/><path d="M2.5 4.3L4.5 2L6.5 4.3zM2.5 6.2L4.5 8.5L6.5 6.2z" fill="#111"/></svg>
<div class="a" style="left:893px;top:40.5px;width:40px;height:10.5px;background:#fbfbfb;"></div>
<span class="t" style="left:896px;top:42.75px;font-size:7.5px;color:#111;transform:scaleX(0.8693);">19.05 mm</span>
<svg class="a" style="left:943px;top:39px;" width="26" height="13" viewBox="0 0 26 13"><path d="M2 2l7 7M9 3l-1 6l-6-1" stroke="#ddd" fill="none"/><rect x="13" y="2" width="4" height="10" fill="#ddd"/><path d="M14 6h2l-1 2z" fill="#111"/><rect x="20" y="3" width="2" height="2" fill="#ddd"/><rect x="20" y="8" width="2" height="2" fill="#ddd"/></svg>
<div class="a" style="left:1212.5px;top:18.5px;width:16px;height:10.5px;background:#a8a8a8;border:1px solid #555;box-sizing:border-box;border-radius:2px;"></div>
<div class="a" style="left:1217.5px;top:24px;width:8px;height:2px;background:#fff;"></div>
<div class="a" style="left:1246.5px;top:18.5px;width:28px;height:10.5px;background:#d03a22;border:1px solid #7a1e16;box-sizing:border-box;border-radius:2px;"></div>
<svg class="a" style="left:1255px;top:19.5px;" width="11" height="9" viewBox="0 0 11 9"><path d="M2 1.5l7 6M9 1.5l-7 6" stroke="#fff" stroke-width="1.8"/></svg>
<svg class="a" style="left:1264px;top:41px;" width="10" height="10" viewBox="0 0 10 10"><path d="M1 3h2l-1 1.5z" fill="#111"/><path d="M4 2.5h5M4 4.5h5M4 6.5h5" stroke="#222"/></svg>
<div class="a" style="left:641px;top:13px;width:639px;height:48.3px;background:rgba(0,0,0,.57);"></div>
<div class="a" style="left:641px;top:12.5px;width:639px;height:50px;overflow:hidden;">
<span class="t" style="left:23.5px;top:-1.95px;font-size:38.5px;color:#fff;font-weight:900;transform:scaleX(0.9506);">キラキラをブラシに登録 微調整する</span>
</div>
<svg class="a" style="left:5px;top:57px;" width="10" height="6" viewBox="0 0 10 6"><path d="M1 .5L4 3L1 5.5zM5 .5L8 3L5 5.5z" fill="#eee"/></svg>
<svg class="a" style="left:7px;top:67px;" width="16" height="3" viewBox="0 0 16 3"><rect x="0" y="0.5" width="1" height="2" fill="#6c6b6c"/><rect x="2" y="0.5" width="1" height="2" fill="#6c6b6c"/><rect x="4" y="0.5" width="1" height="2" fill="#6c6b6c"/><rect x="6" y="0.5" width="1" height="2" fill="#6c6b6c"/><rect x="8" y="0.5" width="1" height="2" fill="#6c6b6c"/><rect x="10" y="0.5" width="1" height="2" fill="#6c6b6c"/><rect x="12" y="0.5" width="1" height="2" fill="#6c6b6c"/><rect x="14" y="0.5" width="1" height="2" fill="#6c6b6c"/></svg>
<div class="a" style="left:6.5px;top:74.5px;width:16px;height:14px;background:#6f93b3;"></div>
<svg class="a" style="left:4px;top:74.5px;" width="22" height="16" viewBox="0 0 22 16"><path d="M8.500 3.500v8.500l2-1.900l1.400 3l1.400-.7l-1.400-2.900h2.700z" fill="#111"/></svg>
<svg class="a" style="left:4px;top:88.8px;" width="22" height="16" viewBox="0 0 22 16"><path d="M8 2.5v9.5l2.2-2.1l1.5 3.2l1.5-.7l-1.5-3.1h3z" fill="#fff" stroke="#111" stroke-width=".9"/><path d="M10 6l4 5.5" stroke="#111" stroke-width="1.6"/><rect x="16.6" y="12" width="1.8" height="1.8" fill="#111"/></svg>
<svg class="a" style="left:4px;top:101.5px;" width="22" height="16" viewBox="0 0 22 16"><path d="M10 7l6.5 6.5" stroke="#222" stroke-width="1.5"/><path d="M8 2v7M4.5 5.5h7M5.5 3l5 5M10.500 3l-5 5" stroke="#ddd" stroke-width=".9"/></svg>
<svg class="a" style="left:4px;top:116.3px;" width="22" height="16" viewBox="0 0 22 16"><ellipse cx="11" cy="6.5" rx="5" ry="3.3" fill="none" stroke="#222" stroke-width="1.4"/><path d="M6.500 9c-1.500 1-1 3 .5 3.500" fill="none" stroke="#222"/><path d="M10 7v7l5.500-3.500z" fill="#eee" stroke="#333" stroke-width=".6"/></svg>
<div class="a" style="left:6px;top:131.5px;width:18px;height:1px;background:#c4c4c4;"></div>
<svg class="a" style="left:4px;top:133px;" width="22" height="16" viewBox="0 0 22 16"><path d="M10.500 1.500l3 6l-1.500 4h-3l-1.500-4z" fill="#eee" stroke="#111" stroke-width="1"/><path d="M10.500 2v6" stroke="#111"/><circle cx="10.500" cy="8.300" r="1" fill="#111"/><rect x="8.500" y="12" width="4" height="2.500" fill="#111"/><rect x="16.6" y="12" width="1.8" height="1.8" fill="#111"/></svg>
<svg class="a" style="left:4px;top:146.5px;" width="22" height="16" viewBox="0 0 22 16"><text x="5.500" y="13.500" font-family="Liberation Serif,serif" font-size="15" fill="#111">T</text><rect x="16.6" y="12" width="1.8" height="1.8" fill="#111"/></svg>
<svg class="a" style="left:4px;top:161px;" width="22" height="16" viewBox="0 0 22 16"><path d="M6 2.500l10 11" stroke="#111" stroke-width="1.300"/><rect x="16.6" y="12" width="1.8" height="1.8" fill="#111"/></svg>
<svg class="a" style="left:4px;top:174.5px;" width="22" height="16" viewBox="0 0 22 16"><ellipse cx="10.500" cy="8" rx="5.200" ry="3.800" fill="#e9e9e9" stroke="#aaa" stroke-width=".6"/><rect x="16.6" y="12" width="1.8" height="1.8" fill="#111"/></svg>
<svg class="a" style="left:4px;top:188.7px;" width="22" height="16" viewBox="0 0 22 16"><path d="M16.500 2.500l-7 7" stroke="#222" stroke-width="1.400"/><path d="M10 9c-2.500 1-2.500 3.500-4.500 4c2.500.8 5-.5 5.500-3z" fill="#333"/></svg>
<svg class="a" style="left:4px;top:202.8px;" width="22" height="16" viewBox="0 0 22 16"><path d="M15 2.500l1.800 1.800l-8 8l-3 1.200l1.200-3z" fill="#eee" stroke="#333" stroke-width=".7"/><rect x="16.6" y="12" width="1.8" height="1.8" fill="#111"/></svg>
<svg class="a" style="left:4px;top:216px;" width="22" height="16" viewBox="0 0 22 16"><path d="M5.500 7h7l2 2.500l-2 3.500h-7z" fill="#eee" stroke="#222" stroke-width=".9"/><path d="M9 9.500l8-7" stroke="#222" stroke-width="1.300"/></svg>
<svg class="a" style="left:4px;top:230.3px;" width="22" height="16" viewBox="0 0 22 16"><path d="M6 10l6-5.500h5l-6 5.500z" fill="#f2f2f2" stroke="#999" stroke-width=".5"/><path d="M6 10h5v2.500h-5z" fill="#ccc"/><rect x="16.6" y="12" width="1.8" height="1.8" fill="#111"/></svg>
<div class="a" style="left:6px;top:245.5px;width:18px;height:1px;background:#c4c4c4;"></div>
<svg class="a" style="left:4px;top:246px;" width="22" height="16" viewBox="0 0 22 16"><path d="M14.500 5.500a4.800 4.800 0 1 1-4.300-2.500" fill="none" stroke="#333" stroke-width="1.200" stroke-dasharray="2.500 1.200"/><path d="M10 1l3 2l-3 2z" fill="#222"/><rect x="16.6" y="12" width="1.8" height="1.8" fill="#111"/></svg>
<svg class="a" style="left:4px;top:259.5px;" width="22" height="16" viewBox="0 0 22 16"><rect x="6" y="3.500" width="9" height="7.500" fill="#ddd" stroke="#555" stroke-width=".7"/><rect x="7" y="4.500" width="4" height="3" fill="#222"/><path d="M11 11l4-4" stroke="#222"/><rect x="16.6" y="12" width="1.8" height="1.8" fill="#111"/></svg>
<svg class="a" style="left:4px;top:274.5px;" width="22" height="16" viewBox="0 0 22 16"><path d="M5 7c4-2 5 3 12 4M5 9c4 2 6-3 12 2" fill="none" stroke="#666" stroke-width="1"/><path d="M11 4l4 6" stroke="#222" stroke-width="1.300"/><rect x="16.6" y="12" width="1.8" height="1.8" fill="#111"/></svg>
<svg class="a" style="left:4px;top:288px;" width="22" height="16" viewBox="0 0 22 16"><rect x="6.500" y="3.500" width="10" height="9" fill="none" stroke="#111" stroke-width="1.500" stroke-dasharray="2 1.700"/><path d="M6 3l5 2l-3 3z" fill="#111"/></svg>
<svg class="a" style="left:4px;top:302px;" width="22" height="16" viewBox="0 0 22 16"><ellipse cx="9" cy="6.500" rx="4" ry="3" fill="#ddd" stroke="#555" stroke-width=".7"/><ellipse cx="12.500" cy="7.500" rx="3" ry="2.500" fill="#eee" stroke="#555" stroke-width=".7"/><path d="M11 7v7l5-3.500z" fill="#eee" stroke="#222" stroke-width=".7"/><rect x="16.6" y="12" width="1.8" height="1.8" fill="#111"/></svg>
<svg class="a" style="left:4px;top:316px;" width="22" height="16" viewBox="0 0 22 16"><path d="M6 3l9 2v8h-9z" fill="#bbb" stroke="#666" stroke-width=".6"/><path d="M9 3.500v9.500M12 4.300v8.700M6 6.500l9 1M6 10h9" stroke="#eee" stroke-width=".7"/><rect x="16.6" y="12" width="1.8" height="1.8" fill="#111"/></svg>
<div class="a" style="left:6px;top:332px;width:18px;height:1px;background:#c4c4c4;"></div>
<svg class="a" style="left:4px;top:333px;" width="22" height="16" viewBox="0 0 22 16"><rect x="5.500" y="3.500" width="11" height="9" fill="#ddd" stroke="#555" stroke-width=".7"/><path d="M5.500 8c4-3 7 3 11 0M11 3.500c-2 3 2 6 0 9" fill="none" stroke="#333" stroke-width="1"/></svg>
<svg class="a" style="left:4px;top:346px" width="22" height="16" viewBox="0 0 22 16"><defs><linearGradient id="tg" x1="0" x2="1"><stop offset="0" stop-color="#fff"/><stop offset="1" stop-color="#111"/></linearGradient></defs><rect x="6" y="3" width="11" height="9.500" fill="url(#tg)" stroke="#444" stroke-width=".6"/></svg>
<svg class="a" style="left:4px;top:360px;" width="22" height="16" viewBox="0 0 22 16"><path d="M16 2.500l1.500 1.500l-2.500 2.500l-1.500-1.500z" fill="#111"/><path d="M13.500 5l1.500 1.500l-7 7l-2 .5l.5-2z" fill="#ddd" stroke="#333" stroke-width=".7"/><rect x="16.6" y="12" width="1.8" height="1.8" fill="#111"/></svg>
<svg class="a" style="left:4px;top:373px;" width="22" height="16" viewBox="0 0 22 16"><rect x="6" y="2.500" width="4" height="4" fill="#ddd" stroke="#666" stroke-width=".6"/><circle cx="14.500" cy="11.500" r="2.300" fill="#eee" stroke="#666" stroke-width=".6"/><path d="M10 6.500l3 3.500" stroke="#444" stroke-dasharray="1 1"/></svg>
<div class="a" style="left:6px;top:390px;width:18px;height:1px;background:#c4c4c4;"></div>
<svg class="a" style="left:4px;top:390.5px;" width="22" height="16" viewBox="0 0 22 16"><rect x="8" y="5" width="7" height="8" fill="#ddd" stroke="#333" stroke-width=".8"/><path d="M6 3.500c2-1.500 4-1.500 6 0" fill="none" stroke="#333" stroke-dasharray="1 1"/><rect x="10" y="7" width="3" height="3" fill="#555"/><rect x="16.6" y="12" width="1.8" height="1.8" fill="#111"/></svg>
<svg class="a" style="left:4px;top:405.3px;" width="22" height="16" viewBox="0 0 22 16"><path d="M5.500 2.500v10.500h12" fill="none" stroke="#222" stroke-width="1"/><rect x="7.500" y="7" width="2" height="5.500" fill="#555"/><rect x="10.500" y="5" width="2" height="7.500" fill="#555"/><rect x="13.500" y="8.500" width="2" height="4" fill="#555"/><rect x="16.6" y="12" width="1.8" height="1.8" fill="#111"/></svg>
<div class="a" style="left:6px;top:420.5px;width:18px;height:1px;background:#c4c4c4;"></div>
<svg class="a" style="left:4px;top:421.5px;" width="22" height="16" viewBox="0 0 22 16"><rect x="6.500" y="3.500" width="9" height="9" fill="none" stroke="#333" stroke-width="1.200"/></svg>
<svg class="a" style="left:4px;top:434.5px;" width="22" height="16" viewBox="0 0 22 16"><path d="M16.500 2l-10 11" stroke="#222" stroke-width="1.300"/><path d="M9 8l5.500-4.500l1 1z" fill="#ddd"/><rect x="16.6" y="12" width="1.8" height="1.8" fill="#111"/></svg>
<svg class="a" style="left:4px;top:449px;" width="22" height="16" viewBox="0 0 22 16"><path d="M7 8v-3.500h1.500v-1h1.500v-.5h1.500v.8h1.500v1.500h1.500v5l-1.500 3.500h-5l-3-4.500l1-.8z" fill="#f2f2f2" stroke="#888" stroke-width=".5"/><rect x="16.6" y="12" width="1.8" height="1.8" fill="#111"/></svg>
<svg class="a" style="left:4px;top:462.6px;" width="22" height="16" viewBox="0 0 22 16"><circle cx="9.500" cy="6.500" r="3.600" fill="#ddd" stroke="#222" stroke-width="1.300"/><path d="M12 9.500l5 5" stroke="#222" stroke-width="2"/></svg>
<div class="a" style="left:6px;top:479px;width:18px;height:1px;background:#c4c4c4;"></div>
<svg class="a" style="left:7px;top:481px;" width="18" height="9" viewBox="0 0 18 9"><rect x="3" y="3" width="5" height="5" fill="#111"/><rect x="1" y="1" width="5" height="5" fill="#fff" stroke="#555" stroke-width=".5"/><path d="M11.500 2c2-1 4 1 3.500 4" fill="none" stroke="#222" stroke-width="1.100"/><path d="M10.500 1l2 .2l-1 2zM16 7l-2-.5l2-1.500z" fill="#222"/></svg>
<svg class="a" style="left:11.5px;top:497px;" width="12" height="12" viewBox="0 0 12 12"><rect x=".75" y=".75" width="10.500" height="10.500" fill="#fff" stroke="#ddd" stroke-width="1"/><rect x="3.500" y="3.500" width="5" height="5" fill="#878687" stroke="#333" stroke-width=".8"/><path d="M1 11L11 1" stroke="#b0121b" stroke-width="1.500"/></svg>
<div class="a" style="left:6.5px;top:492.5px;width:11px;height:10.5px;background:#f39a00;border:1px solid #e8e8e8;box-sizing:border-box;"></div>
<div class="a" style="left:6px;top:512px;width:18px;height:1px;background:#c4c4c4;"></div>
<div class="a" style="left:6.5px;top:514.5px;width:5px;height:5.5px;background:#f39a00;border:none;box-sizing:border-box;outline:1px solid #ccc;"></div>
<div class="a" style="left:12.5px;top:514.5px;width:4.5px;height:5.5px;border:none;box-sizing:border-box;background:linear-gradient(90deg,#fff,#444);"></div>
<svg class="a" style="left:18px;top:514px;" width="6" height="6.5" viewBox="0 0 6 6.5"><rect width="6" height="6.500" fill="#fff"/><path d="M.5 6L5.500 .5" stroke="#b0121b" stroke-width="1.300"/></svg>
<div class="a" style="left:6px;top:522.5px;width:18px;height:1px;background:#c4c4c4;"></div>
<svg class="a" style="left:9px;top:524.5px;" width="12" height="10" viewBox="0 0 12 10"><circle cx="5" cy="4" r="3" fill="#eee" stroke="#666" stroke-width=".6"/><rect x="5" y="4" width="5" height="4.500" fill="#333"/></svg>
<div class="a" style="left:6px;top:536.5px;width:18px;height:1px;background:#c4c4c4;"></div>
<svg class="a" style="left:8px;top:539px;" width="14" height="10" viewBox="0 0 14 10"><rect x="5" y="1" width="7" height="5" fill="#eee"/><rect x="1.500" y="4" width="7" height="5" fill="#f8f8f8" stroke="#888" stroke-width=".5"/></svg>
<svg class="a" style="left:1266px;top:57px;" width="9" height="6" viewBox="0 0 9 6"><path d="M4 .5L1.500 3L4 5.500zM7.500 .5L5 3L7.500 5.500z" fill="#ccc"/></svg>
<svg class="a" style="left:1257px;top:66px;" width="17" height="3" viewBox="0 0 17 3"><rect x="0" y="0.5" width="1" height="2" fill="#6c6b6c"/><rect x="2" y="0.5" width="1" height="2" fill="#6c6b6c"/><rect x="4" y="0.5" width="1" height="2" fill="#6c6b6c"/><rect x="6" y="0.5" width="1" height="2" fill="#6c6b6c"/><rect x="8" y="0.5" width="1" height="2" fill="#6c6b6c"/><rect x="10" y="0.5" width="1" height="2" fill="#6c6b6c"/><rect x="12" y="0.5" width="1" height="2" fill="#6c6b6c"/><rect x="14" y="0.5" width="1" height="2" fill="#6c6b6c"/></svg>
<svg class="a" style="left:1257px;top:153px;" width="17" height="3" viewBox="0 0 17 3"><rect x="0" y="0.5" width="1" height="2" fill="#6c6b6c"/><rect x="2" y="0.5" width="1" height="2" fill="#6c6b6c"/><rect x="4" y="0.5" width="1" height="2" fill="#6c6b6c"/><rect x="6" y="0.5" width="1" height="2" fill="#6c6b6c"/><rect x="8" y="0.5" width="1" height="2" fill="#6c6b6c"/><rect x="10" y="0.5" width="1" height="2" fill="#6c6b6c"/><rect x="12" y="0.5" width="1" height="2" fill="#6c6b6c"/><rect x="14" y="0.5" width="1" height="2" fill="#6c6b6c"/></svg>
<svg class="a" style="left:1257px;top:224.5px;" width="17" height="3" viewBox="0 0 17 3"><rect x="0" y="0.5" width="1" height="2" fill="#6c6b6c"/><rect x="2" y="0.5" width="1" height="2" fill="#6c6b6c"/><rect x="4" y="0.5" width="1" height="2" fill="#6c6b6c"/><rect x="6" y="0.5" width="1" height="2" fill="#6c6b6c"/><rect x="8" y="0.5" width="1" height="2" fill="#6c6b6c"/><rect x="10" y="0.5" width="1" height="2" fill="#6c6b6c"/><rect x="12" y="0.5" width="1" height="2" fill="#6c6b6c"/><rect x="14" y="0.5" width="1" height="2" fill="#6c6b6c"/></svg>
<svg class="a" style="left:1257px;top:292px;" width="17" height="3" viewBox="0 0 17 3"><rect x="0" y="0.5" width="1" height="2" fill="#6c6b6c"/><rect x="2" y="0.5" width="1" height="2" fill="#6c6b6c"/><rect x="4" y="0.5" width="1" height="2" fill="#6c6b6c"/><rect x="6" y="0.5" width="1" height="2" fill="#6c6b6c"/><rect x="8" y="0.5" width="1" height="2" fill="#6c6b6c"/><rect x="10" y="0.5" width="1" height="2" fill="#6c6b6c"/><rect x="12" y="0.5" width="1" height="2" fill="#6c6b6c"/><rect x="14" y="0.5" width="1" height="2" fill="#6c6b6c"/></svg>
<div class="a" style="left:1253px;top:150px;width:24px;height:1px;background:#5c5b5c;"></div>
<div class="a" style="left:1253px;top:151px;width:24px;height:1px;background:#9c9b9c;"></div>
<div class="a" style="left:1253px;top:221.5px;width:24px;height:1px;background:#5c5b5c;"></div>
<div class="a" style="left:1253px;top:222.5px;width:24px;height:1px;background:#9c9b9c;"></div>
<div class="a" style="left:1253px;top:289.5px;width:24px;height:1px;background:#5c5b5c;"></div>
<div class="a" style="left:1253px;top:290.5px;width:24px;height:1px;background:#9c9b9c;"></div>
<svg class="a" style="left:1256px;top:73px;" width="18" height="16" viewBox="0 0 18 16"><path d="M3 9c0-4 5-6 9-5c3 1 2 3 0 3.500c-1.500 .5 0 2.500-2 3c-3 1-7 1-7-1.500z" fill="#222"/><circle cx="6" cy="8.500" r="1.200" fill="#fff"/><circle cx="8" cy="6" r="1.200" fill="#fff"/><circle cx="11" cy="5.500" r="1.200" fill="#ddd"/><circle cx="9" cy="10" r="1" fill="#ccc"/></svg>
<svg class="a" style="left:1256px;top:93px" width="18" height="16" viewBox="0 0 18 16"><defs><linearGradient id="dg" x1="0" y1="0" x2="1" y2="1"><stop offset="0" stop-color="#fff"/><stop offset="1" stop-color="#1a1a1a"/></linearGradient></defs><rect x="3.500" y="4" width="11" height="8" fill="url(#dg)" stroke="#333" stroke-width=".6"/></svg>
<svg class="a" style="left:1256px;top:113px;" width="18" height="16" viewBox="0 0 18 16"><rect x="3.500" y="4" width="11" height="8.500" fill="#222"/><rect x="4.5" y="5.0" width="1.600" height="1.500" fill="#fff"/><rect x="4.5" y="7.5" width="1.600" height="1.500" fill="#999"/><rect x="4.5" y="10.0" width="1.600" height="1.500" fill="#fff"/><rect x="7.1" y="5.0" width="1.600" height="1.500" fill="#999"/><rect x="7.1" y="7.5" width="1.600" height="1.500" fill="#fff"/><rect x="7.1" y="10.0" width="1.600" height="1.500" fill="#999"/><rect x="9.7" y="5.0" width="1.600" height="1.500" fill="#fff"/><rect x="9.7" y="7.5" width="1.600" height="1.500" fill="#999"/><rect x="9.7" y="10.0" width="1.600" height="1.500" fill="#fff"/><rect x="12.3" y="5.0" width="1.600" height="1.500" fill="#999"/><rect x="12.3" y="7.5" width="1.600" height="1.500" fill="#fff"/><rect x="12.3" y="10.0" width="1.600" height="1.500" fill="#999"/></svg>
<svg class="a" style="left:1256px;top:133px;" width="18" height="16" viewBox="0 0 18 16"><circle cx="7.500" cy="7" r="3.500" fill="#333" stroke="#111" stroke-width=".6"/><circle cx="10.500" cy="9.500" r="3.500" fill="#ddd" stroke="#222" stroke-width=".8"/></svg>
<svg class="a" style="left:1256px;top:161px;" width="18" height="16" viewBox="0 0 18 16"><path d="M9 6.500l6 3l-6 3l-6-3z" fill="#222"/><path d="M9 2.500l6 3l-6 3l-6-3z" fill="#f2f2f2" stroke="#777" stroke-width=".4"/></svg>
<svg class="a" style="left:1256px;top:181.5px;" width="18" height="16" viewBox="0 0 18 16"><path d="M3.500 4.500h11" stroke="#333" stroke-width="1"/><path d="M3.500 7.500h11" stroke="#222" stroke-width="1.600"/><path d="M3.500 11h11" stroke="#111" stroke-width="2.600"/></svg>
<div class="a" style="left:1254.5px;top:200.5px;width:21px;height:19.5px;background:#5f5e5f;border:1px solid #4a494a;box-sizing:border-box;border-radius:2px;"></div>
<svg class="a" style="left:1256px;top:202px;" width="18" height="16" viewBox="0 0 18 16"><circle cx="9" cy="8" r="4.800" fill="#2a2a2a" stroke="#eee" stroke-width="1.500"/><circle cx="7.800" cy="6.800" r="1.400" fill="#777"/></svg>
<svg class="a" style="left:1256px;top:230px;" width="18" height="16" viewBox="0 0 18 16"><rect x="4.500" y="3.500" width="9" height="9" fill="#fff" stroke="#111" stroke-width="1.600" stroke-dasharray="2 1.500"/></svg>
<svg class="a" style="left:1256px;top:249.5px;" width="18" height="16" viewBox="0 0 18 16"><path d="M4.500 2.500v11" stroke="#111" stroke-width="1.200"/><rect x="5.500" y="4" width="5" height="3" fill="#999"/><rect x="5.500" y="8.500" width="9" height="3.500" fill="#111"/></svg>
<svg class="a" style="left:1256px;top:269.5px;" width="18" height="16" viewBox="0 0 18 16"><rect x="4" y="3" width="6" height="6" fill="#999" stroke="#222" stroke-width=".8"/><rect x="8" y="7" width="6.500" height="6.500" fill="#111"/></svg>
<svg class="a" style="left:1256px;top:299.5px;" width="18" height="16" viewBox="0 0 18 16"><text x="2.500" y="13" font-family="Liberation Sans,sans-serif" font-size="12" fill="#111">A</text><path d="M13.500 4v10" stroke="#111" stroke-width="1.100"/></svg>
<svg class="a" style="left:1256px;top:319.5px;" width="18" height="16" viewBox="0 0 18 16"><text x="4.500" y="13" font-family="Liberation Sans,sans-serif" font-size="13" font-weight="700" fill="#444">¶</text></svg>
</body>
</html>
